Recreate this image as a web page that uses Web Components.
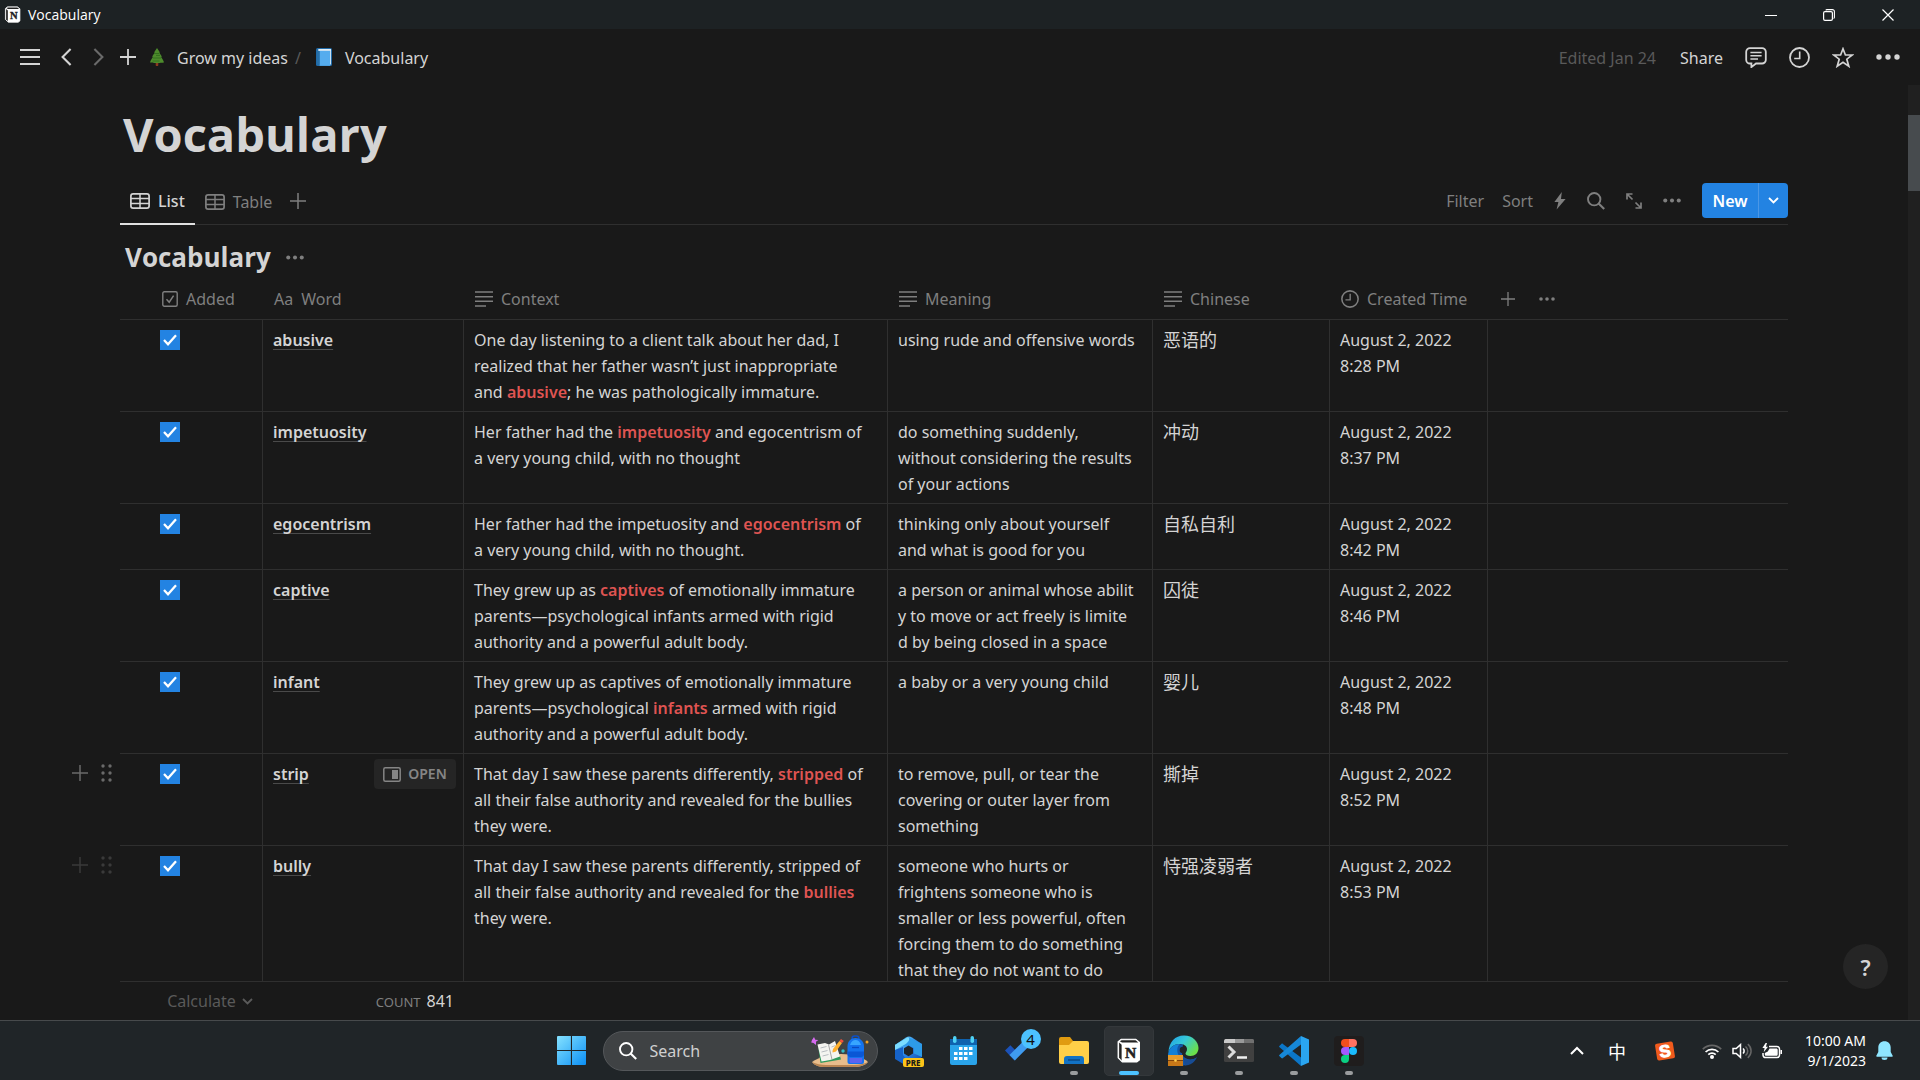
<!DOCTYPE html>
<html lang="en">
<head>
<meta charset="utf-8">
<title>Vocabulary</title>
<style>
  html, body { height: 100%; margin: 0; }
  body {
    --line: #2f2f2f; --text: #d4d4d4; --muted: #7f7f7f; --dim: #5a5a5a; --accent: #2383e2;
    background: #191919; color: var(--text);
    font: 16px/26px "Noto Sans", "Open Sans", "Noto Sans CJK SC", sans-serif;
    overflow: hidden;
  }
</style>
</head>
<body>
<app-window></app-window>

<script>
const BASE = `
  * { box-sizing: border-box; }
  button { font: inherit; color: inherit; background: none; border: 0; padding: 0; margin: 0; display: inline-flex; align-items: center; justify-content: center; }
  a { color: inherit; text-decoration: none; }
`;

class BaseElement extends HTMLElement {
  constructor() { super(); this.attachShadow({ mode: 'open' }); }
  connectedCallback() {
    this.shadowRoot.innerHTML = `<style>${BASE}${this.styles()}</style>${this.markup()}`;
  }
  styles() { return ''; }
  markup() { return ''; }
}

/* name: [width, height, svg body] */
const ICONS = {
  notion: [24, 24, '<path d="M2 3.5 5 1.2h14L22.5 4v17L20 23H6l-4-4z" fill="#fff" stroke="#fff"/><path d="M3 4.2 5.4 6.5V21.5L3 18.6z" fill="#222"/><path d="M3.6 3.2 5.4 2.2h13.4l2.6 2H5.8z" fill="#222"/><path d="M6.6 6.2h14.6v15H6.6z" fill="#fff"/><text x="14" y="19" text-anchor="middle" font-family="Liberation Serif" font-weight="700" font-size="15" fill="#222" stroke="#222" stroke-width=".5">N</text>'],
  min: [12, 12, '<path d="M0 6.5h12" stroke="#fff" fill="none"/>'],
  restore: [12, 12, '<rect x=".6" y="2.6" width="8.8" height="8.8" rx="1.4" fill="none" stroke="#fff" stroke-width="1.2"/><path d="M2.8 1.4C3 .8 3.5.6 4 .6h5.4a2 2 0 0 1 2 2v5.6c0 .5-.3 1-.8 1.2" fill="none" stroke="#fff" stroke-width="1.1"/>'],
  close: [12, 12, '<path d="M.5.5l11 11M11.5.5l-11 11" stroke="#fff" stroke-width="1.2"/>'],
  menu: [20, 18, '<path d="M0 2h20M0 9h20M0 16h20" stroke="currentColor" stroke-width="1.8"/>'],
  back: [11, 18, '<path d="M9.6 1 1.6 9l8 8" fill="none" stroke="currentColor" stroke-width="2.1"/>'],
  forward: [11, 18, '<path d="M1.4 1l8 8-8 8" fill="none" stroke="currentColor" stroke-width="2.1"/>'],
  plus: [16, 16, '<path d="M8 0v16M0 8h16" stroke="currentColor" stroke-width="1.8"/>'],
  plusthin: [16, 16, '<path d="M8 0v16M0 8h16" stroke="currentColor" stroke-width="1.5"/>'],
  tree: [14, 18, '<path d="M5.7 14h2.6v3a1.3 1.3 0 0 1-2.6 0z" fill="#8a3a1e"/><path d="M7 0 10 4.6H9.2L12 8.8h-1L13 12l1 2.2c0 .9-14 .9-14 0L1 12l2-3.2H2L4.8 4.6H4z" fill="#4d8b2c"/><path d="M4 5.5h5M3 10h8M6 7.4h4M2.5 13h7" stroke="#2f6a1c" stroke-width=".8"/>'],
  book: [16, 18, '<rect width="16" height="18" rx="1.6" fill="#1f6aa8"/><path d="M2 2.3C2 1.5 2.6 1 3.4 1H15v15.5h-1.2V3H2z" fill="#e2ecf2"/><rect x="3.6" y="2.8" width="10.6" height="15" fill="#55acee"/><path d="M1 2v14.5h2.4V3z" fill="#266fa8"/>'],
  comment: [22, 21, '<path d="M5 1.1h12a3.7 3.7 0 0 1 3.8 3.6v8.2a3.7 3.7 0 0 1-3.8 3.6H11l-4.6 3.6v-3.6H5A3.7 3.7 0 0 1 1.2 13V4.7A3.7 3.7 0 0 1 5 1.1z" fill="none" stroke="currentColor" stroke-width="1.8"/><path d="M5.4 5.6h11.2M5.4 8.8h11.2M5.4 12h7.6" stroke="currentColor" stroke-width="1.5"/>'],
  clock: [21, 21, '<circle cx="10.5" cy="10.5" r="9.5" fill="none" stroke="currentColor" stroke-width="1.8"/><path d="M10.7 4.5v7H5.2" fill="none" stroke="currentColor" stroke-width="1.6"/>'],
  star: [22, 21, '<path d="M11 1.8 13.4 8h6.8l-5.4 4.2 2 7L11 15.2l-5.8 4 2-7L1.8 8h6.8z" fill="none" stroke="currentColor" stroke-width="1.7"/>'],
  dots: [24, 6, '<circle cx="3" cy="3" r="2.7" fill="currentColor"/><circle cx="12" cy="3" r="2.7" fill="currentColor"/><circle cx="21" cy="3" r="2.7" fill="currentColor"/>'],
  grid: [20, 16, '<rect x=".9" y=".9" width="18.2" height="14.2" rx="2.2" fill="none" stroke="currentColor" stroke-width="1.7"/><path d="M1 5.6h18M1 10.4h18M10 1v14" stroke="currentColor" stroke-width="1.5"/>'],
  bolt: [12, 18, '<path d="M7.8 0 .4 10h4L2.6 17.5 11.6 7H7z" fill="currentColor"/>'],
  search: [18, 18, '<circle cx="7.2" cy="7.2" r="6.2" fill="none" stroke="currentColor" stroke-width="1.9"/><path d="M11.6 11.6 17.2 17" stroke="currentColor" stroke-width="2.1"/>'],
  expand: [16, 16, '<path d="M1 6.5V1h5.5M15 9.5V15H9.5M1.5 1.5 6.5 6.5M9.500 9.500l5 5" fill="none" stroke="currentColor" stroke-width="1.7"/>'],
  down: [11, 7, '<path d="M1 1l4.5 4.5L10 1" fill="none" stroke="currentColor" stroke-width="1.8"/>'],
  up: [14, 9, '<path d="M1 8l6-6 6 6" fill="none" stroke="currentColor" stroke-width="2"/>'],
  checkbox: [16, 16, '<rect x=".8" y=".8" width="14.4" height="14.4" rx="1.5" fill="none" stroke="currentColor" stroke-width="1.4"/><path d="M4.5 8.2 7.2 11.2 11.6 4.6" fill="none" stroke="currentColor" stroke-width="1.5"/>'],
  lines: [18, 16, '<path d="M0 1h18M0 5.7h18M0 10.3h18M0 15h11" stroke="currentColor" stroke-width="1.5"/>'],
  drag: [11, 18, '<g fill="currentColor"><circle cx="2" cy="2" r="1.7"/><circle cx="9" cy="2" r="1.7"/><circle cx="2" cy="9" r="1.7"/><circle cx="9" cy="9" r="1.7"/><circle cx="2" cy="16" r="1.7"/><circle cx="9" cy="16" r="1.7"/></g>'],
  peek: [18, 15, '<rect x=".8" y=".8" width="16.4" height="13.4" rx="1.5" fill="none" stroke="currentColor" stroke-width="1.5"/><rect x="9" y="3" width="6" height="9" fill="currentColor"/>'],
  check: [14, 12, '<path d="M1 6 5 10.2 13 1.2" fill="none" stroke="#fff" stroke-width="2.3"/>'],
  windows: [29, 29, '<defs><linearGradient id="w" x1="0" y1="0" x2="1" y2="1"><stop offset="0" stop-color="#85e2ff"/><stop offset="1" stop-color="#0b8ff5"/></linearGradient></defs><path d="M1 0h12.9v13.9H0V1a1 1 0 0 1 1-1zM15 0h13a1 1 0 0 1 1 1v12.900H15zM0 15h13.900v14H1a1 1 0 0 1-1-1zM15 15h14v13a1 1 0 0 1-1 1H15z" fill="url(#w)"/>'],
  school: [58, 32, '<path d="M1 27C8 22 18 19 30 19s22 3 27 8c-3 4-10 5-14 5H14C9 32 4 31 1 27z" fill="#e8bd8c"/><path d="M1 27c3 4 8 5 13 5h29c4 0 11-1 14-5-4 2-9 3-14 3H15C10 30 5 29 1 27z" fill="#b98552"/><path d="M7 11 9.5 28 30 24.5 29 21 12 26z" fill="#2f9a5c"/><path d="M6.5 9.5 14 8l4 1.5L24 6l5 15.5-7 2.5-3 1-8.5 1.5z" fill="#f4f4f0"/><path d="M17.5 9.5 21 24.5" stroke="#a7a7a7" stroke-width="1"/><path d="M9.5 13l6-1.5M10.5 17l6-1.5M11.5 21l6-1.5M20.5 12l4-1.5M21.5 16l4-1.5" stroke="#b8bcc0"/><path d="M22 14 21.5 17.5 25 16.5 31 8l-2.6-2z" fill="#ffb02e"/><path d="M28.4 6 30 4l2.8 2L31 8z" fill="#f4513b"/><rect x="41" y="1" width="7" height="5" rx="2.5" fill="none" stroke="#0d4fc4" stroke-width="1.5"/><path d="M36.5 27V11.5C36.5 6 40 3 44.5 3S53 6 53 11.5V27a2 2 0 0 1-2 2H38.5a2 2 0 0 1-2-2z" fill="#1473ef"/><path d="M39 10c1-3.5 3-5 5.5-5S49 6.5 50 10z" fill="#38a6ff"/><path d="M36.5 16.5h16.5v2.5a3 3 0 0 1-3 3H39.5a3 3 0 0 1-3-3z" fill="#0a57d6"/><path d="M38.5 23h12.5v3.5a1.5 1.5 0 0 1-1.5 1.5H40a1.5 1.5 0 0 1-1.5-1.5z" fill="#5b63f0"/><path d="M41 12.5h7" stroke="#0b4ac0" stroke-width="1.3"/><path d="M3 2l1.3 2.7L7.3 5 5 6.7 5 10 2.5 8 .2 7.5 1 5z" fill="#d66bf0"/><circle cx="32" cy="16" r="1.7" fill="#35c0c5"/><circle cx="56" cy="7" r="1.5" fill="#f0a020"/>'],
  m365: [28, 30, '<defs><linearGradient id="m" x1="0" y1="0" x2="1" y2="1"><stop offset="0" stop-color="#7be0ff"/><stop offset=".5" stop-color="#2a86e8"/><stop offset="1" stop-color="#1648a8"/></linearGradient></defs><path d="M0 9 11 1.5c2-1.3 4-1.3 6 0L27 8v13l-9 7H10L0 22z" fill="url(#m)"/><path d="M13 1 27 8v13l-8-3.5V12l-5.5-3L0 12V9z" fill="#2d9be9"/><path d="M13 1c3 2 0 6-4 8L0 14V9z" fill="#7bdcff"/><path d="M0 14l8-3v8l6 7-4 3L0 23z" fill="#1663c9"/><path d="M13.5 9.5 18 12.2v5.2l-4.5 2.8L9 17.4v-5.2z" fill="#202528"/>'],
  calendar: [27, 29, '<path d="M0 3h27v24a2 2 0 0 1-2 2H2a2 2 0 0 1-2-2z" fill="#2aa4ea"/><path d="M0 3h27v6H0z" fill="#0f62ae"/><rect x="3" y="0" width="3.5" height="7" rx="1.7" fill="#4fd2f5"/><rect x="20.5" y="0" width="3.5" height="7" rx="1.7" fill="#4fd2f5"/><path d="M9 12.5h3.5M14 12.5h3.5M19 12.5h3.5M4 17.5h3.5M9 17.5h3.5M14 17.5h3.5M19 17.5h3.5M4 22.5h3.5M9 22.5h3.5M14 22.5h3.5" stroke="#fff" stroke-width="3"/>'],
  todo: [34, 30, '<path d="M0 15 6.5 8.5 15 17 11.5 27z" fill="#1b52b8"/><path d="M5.5 20.5 26 0l6.5 6.5L12 27z" fill="#3f9bf0"/>'],
  folder: [30, 27, '<path d="M0 2a2 2 0 0 1 2-2h9l3 4h10v6H0z" fill="#e09b10"/><path d="M0 8h10l4-4h14a2 2 0 0 1 2 2v19a2 2 0 0 1-2 2H2a2 2 0 0 1-2-2z" fill="#ffcf48"/><path d="M5 27v-5a3 3 0 0 1 3-3h14a3 3 0 0 1 3 3v5z" fill="#1272c4"/><path d="M9 23h12" stroke="#0b4a86" stroke-width="1.5"/>'],
  edge: [31, 31, '<defs><linearGradient id="e" x1="0" y1="0" x2="1" y2=".6"><stop offset="0" stop-color="#1d9be8"/><stop offset=".5" stop-color="#36c8d8"/><stop offset="1" stop-color="#6be04a"/></linearGradient></defs><path d="M15 9c-8 0-15 4-14.5 13L9 31c6 0 16-1 19-8-6 3-12 1-14-4z" fill="#1256a8"/><path d="M.5 17C1 7 7 .5 16 .5S30.5 7 30.5 13c0 5-3.5 8-8 8-3 0-5-1-5-2.5s1.5-2 1.5-4.5c0-3-3-5-7-5C6 9 2 12 .5 17z" fill="url(#e)"/><path d="M.5 17C2 12 6 9 12 9c-3 2-3.5 7-1.5 11H0z" fill="#1380d8"/><circle cx="15" cy="15" r="3.3" fill="#202528"/><path d="M15 22c4 4 9 4 14 0-2 5-6 8-12 8.5z" fill="#174c94"/><rect x="0" y="20" width="15" height="11" fill="#c87818"/><path d="M0 20h15v5H0z" fill="#e59a2c"/><path d="M0 25.5h15" stroke="#80430a"/><circle cx="7.5" cy="25.5" r="1.3" fill="#ffd250"/>'],
  terminal: [30, 23, '<rect width="30" height="23" rx="1.5" fill="#404040"/><path d="M1.5 0H28.5A1.5 1.5 0 0 1 30 1.5V4H0V1.5A1.5 1.5 0 0 1 1.5 0z" fill="#707070"/><path d="M1.5 0H11v4H0V1.5z" fill="#c9c9c9"/><path d="M11 0h9v4h-9z" fill="#999"/><path d="M4.5 7.5 10 13 4.5 18.5" fill="none" stroke="#dcdcdc" stroke-width="3"/><path d="M13 18.5h10" stroke="#f0f0f0" stroke-width="2.5"/>'],
  vscode: [30, 30, '<path d="M22 0l8 3.5v23L22 30z" fill="#2aa5f0"/><path d="M22 30 .6 11.3a1 1 0 0 1 0-1.6l1.8-1.8c.5-.4 1-.4 1.5 0L22 21.5z" fill="#0b76c8"/><path d="M22 0 .6 18.7a1 1 0 0 0 0 1.6l1.8 1.8c.5.4 1 .4 1.5 0L22 8.5z" fill="#1688d8"/>'],
  figma: [30, 30, '<rect width="30" height="30" rx="4" fill="#1f1d1d"/><path d="M11 3h4v8h-4a4 4 0 0 1 0-8z" fill="#f24e1e"/><path d="M15 3h4a4 4 0 0 1 0 8h-4z" fill="#ff7262"/><path d="M11 11h4v8h-4a4 4 0 0 1 0-8z" fill="#a259ff"/><circle cx="19" cy="15" r="4" fill="#1abcfe"/><path d="M11 19h4v4a4 4 0 1 1-4-4z" fill="#0acf83"/>'],
  sogou: [20, 20, '<g transform="rotate(-9 10 10)"><rect x="1" y="1.5" width="18" height="17" rx="2" fill="#f05a1c"/><text x="10" y="16" text-anchor="middle" font-family="Liberation Sans" font-weight="700" font-size="17" fill="#fff" stroke="#fff">S</text></g>'],
  wifi: [20, 16, '<g fill="none" stroke-width="1.7"><path d="M.8 6.2a13 13 0 0 1 18.4 0" stroke="#666"/><path d="M3.6 9a9 9 0 0 1 12.8 0M6.3 11.6a5.2 5.2 0 0 1 7.4 0" stroke="#fff"/></g><circle cx="10" cy="14" r="2" fill="#fff"/>'],
  volume: [20, 16, '<path d="M1 5.5h3.2L8.5 1.6v12.8L4.2 10.5H1z" fill="none" stroke="#fff" stroke-width="1.5"/><path d="M11 5.5c1.5 1.2 1.5 3.8 0 5" fill="none" stroke="#fff" stroke-width="1.6"/><path d="M13.5 3.5c3 2.3 3 6.7 0 9M15.8 1.2c4.4 3.5 4.4 10 0 13.6" fill="none" stroke="#666" stroke-width="1.5"/>'],
  battery: [20, 16, '<path d="M7 3.6h8a2.5 2.5 0 0 1 2.5 2.5v6a2.5 2.5 0 0 1-2.5 2.5H3.5A2.5 2.5 0 0 1 1 12.1V10" fill="none" stroke="#fff" stroke-width="1.5"/><path d="M18.5 7h1.5v4h-1.5z" fill="#fff"/><path d="M7.5 5.6h6.7c1 0 1.5.5 1.5 1.5v4.2c0 1-.5 1.5-1.5 1.5H4.3c-1 0-1.5-.5-1.5-1.5V10l3-1.5z" fill="#fff"/><path d="M3.6 0 .4 5h2.2L1.7 9.2 6 3.7H3.9L5 0z" fill="#fff"/>'],
  bell: [17, 19, '<path d="M8.5.3C4.8.3 2.3 3 2.3 6.5V11L.3 14.8c-.2.5 0 .9.6.9h15.2c.6 0 .8-.4.6-.9L14.7 11V6.5C14.7 3 12.2.3 8.5.3zM5.5 16.5h6a3 2.5 0 0 1-6 0z" fill="#8fe6ff"/>']
};

customElements.define('ui-icon', class extends BaseElement {
  styles() { return ':host{display:inline-flex;flex:none} svg{display:block}'; }
  markup() {
    const [w, h, body] = ICONS[this.getAttribute('name')];
    const width = Number(this.getAttribute('w') || w);
    return `<svg aria-hidden="true" width="${width}" height="${Math.round(width * h / w)}" viewBox="0 0 ${w} ${h}">${body}</svg>`;
  }
});

customElements.define('title-bar', class extends BaseElement {
  styles() { return `
    :host { display: flex; align-items: center; justify-content: space-between; height: 29px; background: #1d2224; color: #fff; font-size: 14px; padding: 0 2px 0 4px; flex: none; }
    .name { display: flex; align-items: center; gap: 7px; font-family: "Open Sans", sans-serif; }
    .controls { display: flex; }
    .controls button { width: 58px; height: 28px; }
    .controls button:last-child { width: 60px; }`; }
  markup() { return `
    <div class="name"><ui-icon name="notion" w="17"></ui-icon><span>Vocabulary</span></div>
    <div class="controls">
      <button aria-label="Minimize"><ui-icon name="min"></ui-icon></button>
      <button aria-label="Restore"><ui-icon name="restore"></ui-icon></button>
      <button aria-label="Close"><ui-icon name="close"></ui-icon></button>
    </div>`; }
});

customElements.define('top-bar', class extends BaseElement {
  styles() { return `
    :host { display: flex; align-items: center; justify-content: space-between; height: 56px; padding: 0 20px; flex: none; }
    nav, .left, .right { display: flex; align-items: center; }
    .left { gap: 21px; }
    .left button:last-of-type { margin-left: -5px; }
    .off { color: #6a6a6a; }
    nav { gap: 13px; margin-left: -7px; }
    nav .sep { color: var(--dim); margin: 0 2px 0 -6px; }
    .right { gap: 22px; }
    a, span, .share { padding-top: 2px; }
    .edited { color: var(--dim); padding-right: 2px; }`; }
  markup() { return `
    <div class="left">
      <button aria-label="Open sidebar"><ui-icon name="menu"></ui-icon></button>
      <button aria-label="Back"><ui-icon name="back"></ui-icon></button>
      <button aria-label="Forward" class="off"><ui-icon name="forward"></ui-icon></button>
      <button aria-label="New page"><ui-icon name="plus"></ui-icon></button>
      <nav aria-label="Breadcrumb">
        <ui-icon name="tree"></ui-icon><a href="#ideas">Grow my ideas</a><span class="sep">/</span>
        <ui-icon name="book"></ui-icon><a href="#vocabulary">Vocabulary</a>
      </nav>
    </div>
    <div class="right">
      <span class="edited">Edited Jan 24</span>
      <button class="share">Share</button>
      <button aria-label="Comments"><ui-icon name="comment"></ui-icon></button>
      <button aria-label="Updates"><ui-icon name="clock"></ui-icon></button>
      <button aria-label="Favorite"><ui-icon name="star"></ui-icon></button>
      <button aria-label="More"><ui-icon name="dots"></ui-icon></button>
    </div>`; }
});

customElements.define('view-bar', class extends BaseElement {
  styles() { return `
    :host { display: flex; justify-content: space-between; height: 47px; border-bottom: 1px solid var(--line); color: var(--muted); margin-top: 14px; flex: none; }
    .tabs, .tools { display: flex; align-items: center; }
    .tab { height: 47px; gap: 8px; padding: 1px 10px 0; }
    .tab.on { color: var(--text); font-weight: 500; border-bottom: 2px solid #e0e0e0; }
    .tabs > .add { margin-left: 8px; }
    .tools { gap: 21px; padding-bottom: 1px; }
    .sort { margin-left: -3px; }
    .split { display: flex; height: 35px; background: var(--accent); color: #fff; border-radius: 4px; }
    .split button { font-weight: 600; width: 56px; }
    .split button + button { width: 30px; border-left: 1px solid #4a97e6; }`; }
  markup() { return `
    <div class="tabs">
      <button class="tab on"><ui-icon name="grid"></ui-icon>List</button>
      <button class="tab"><ui-icon name="grid"></ui-icon>Table</button>
      <button class="add" aria-label="Add view"><ui-icon name="plusthin"></ui-icon></button>
    </div>
    <div class="tools">
      <button>Filter</button>
      <button class="sort">Sort</button>
      <button aria-label="Automations"><ui-icon name="bolt"></ui-icon></button>
      <button aria-label="Search"><ui-icon name="search"></ui-icon></button>
      <button aria-label="Full page"><ui-icon name="expand"></ui-icon></button>
      <button aria-label="More"><ui-icon name="dots" w="18"></ui-icon></button>
      <div class="split"><button>New</button><button aria-label="New options"><ui-icon name="down"></ui-icon></button></div>
    </div>`; }
});

const ROWS = [
  ['abusive', 'One day listening to a client talk about her dad, I<br>realized that her father wasn’t just inappropriate<br>and <b>abusive</b>; he was pathologically immature.', 'using rude and offensive words', '恶语的', '8:28 PM'],
  ['impetuosity', 'Her father had the <b>impetuosity</b> and egocentrism of<br>a very young child, with no thought', 'do something suddenly,<br>without considering the results<br>of your actions', '冲动', '8:37 PM'],
  ['egocentrism', 'Her father had the impetuosity and <b>egocentrism</b> of<br>a very young child, with no thought.', 'thinking only about yourself<br>and what is good for you', '自私自利', '8:42 PM'],
  ['captive', 'They grew up as <b>captives</b> of emotionally immature<br>parents—psychological infants armed with rigid<br>authority and a powerful adult body.', 'a person or animal whose abilit<br>y to move or act freely is limite<br>d by being closed in a space', '囚徒', '8:46 PM'],
  ['infant', 'They grew up as captives of emotionally immature<br>parents—psychological <b>infants</b> armed with rigid<br>authority and a powerful adult body.', 'a baby or a very young child', '婴儿', '8:48 PM'],
  ['strip', 'That day I saw these parents differently, <b>stripped</b> of<br>all their false authority and revealed for the bullies<br>they were.', 'to remove, pull, or tear the<br>covering or outer layer from<br>something', '撕掉', '8:52 PM', 'hover'],
  ['bully', 'That day I saw these parents differently, stripped of<br>all their false authority and revealed for the <b>bullies</b><br>they were.', 'someone who hurts or<br>frightens someone who is<br>smaller or less powerful, often<br>forcing them to do something<br>that they do not want to do', '恃强凌弱者', '8:53 PM', 'fading']
];

customElements.define('check-box', class extends BaseElement {
  styles() { return `
    :host { display: block; width: 20px; height: 20px; }
    label { display: grid; place-items: center; }
    label > * { grid-area: 1 / 1; }
    input { appearance: none; margin: 0; width: 20px; height: 20px; }
    input:checked { background: var(--accent); }`; }
  markup() { return `<label><input type="checkbox" checked aria-label="${this.getAttribute('label')}"><ui-icon name="check"></ui-icon></label>`; }
});

customElements.define('vocab-table', class extends BaseElement {
  styles() { return `
    :host { display: block; flex: 1; min-height: 0; overflow: hidden; padding: 0 120px; }
    table { width: 100%; table-layout: fixed; border-collapse: separate; border-spacing: 0; }
    th { height: 45px; padding: 3px 10px 0; font-weight: 400; text-align: left; color: var(--muted); border-bottom: 1px solid var(--line); white-space: nowrap; }
    th > span { display: flex; align-items: center; gap: 8px; }
    th:first-child { padding-left: 42px; }
    th:nth-child(n+2) { padding-left: 12px; }
    th:last-child > span { gap: 24px; padding-left: 2px; }
    td { position: relative; vertical-align: top; padding: 7px 0 6px 10px; border-left: 1px solid var(--line); border-bottom: 1px solid var(--line); white-space: nowrap; }
    td:first-child { border-left: 0; padding: 10px 0 0 40px; }
    b { color: #df5452; font-weight: 600; }
    td a { font-weight: 600; text-decoration: underline 1px #4a4a4a; text-underline-offset: 3px; text-decoration-skip-ink: none; }
    .zh { font-family: "Noto Sans CJK SC", sans-serif; font-size: 18px; line-height: 24px; }
    .gutter { position: absolute; left: -48px; top: 10px; display: flex; align-items: center; gap: 13px; color: #6a6a6a; }
    .fading .gutter { color: #3a3a3a; }
    .open { position: absolute; right: 7px; top: 5px; height: 30px; width: 82px; gap: 7px; font-size: 14px; font-weight: 600; color: #858585; background: #252525; border-radius: 4px; }`; }
  markup() {
    const body = ROWS.map(([word, context, meaning, zh, time, state = '']) => `
      <tr class="${state}">
        <td>${state ? '<div class="gutter"><button aria-label="Add row"><ui-icon name="plusthin"></ui-icon></button><button aria-label="Drag row"><ui-icon name="drag"></ui-icon></button></div>' : ''}<check-box label="${word} added"></check-box></td>
        <td><a href="#${word}">${word}</a>${state === 'hover' ? '<button class="open"><ui-icon name="peek"></ui-icon>OPEN</button>' : ''}</td>
        <td>${context}</td><td>${meaning}</td><td class="zh" lang="zh">${zh}</td>
        <td>August 2, 2022<br>${time}</td><td></td>
      </tr>`).join('');
    return `
    <table>
      <colgroup><col style="width:142px"><col style="width:201px"><col style="width:424px"><col style="width:265px"><col style="width:177px"><col style="width:158px"><col></colgroup>
      <thead><tr>
        <th><span><ui-icon name="checkbox"></ui-icon>Added</span></th>
        <th><span><span>Aa</span>Word</span></th>
        <th><span><ui-icon name="lines"></ui-icon>Context</span></th>
        <th><span><ui-icon name="lines"></ui-icon>Meaning</span></th>
        <th><span><ui-icon name="lines"></ui-icon>Chinese</span></th>
        <th><span><ui-icon name="clock" w="18"></ui-icon>Created Time</span></th>
        <th><span><button aria-label="Add property"><ui-icon name="plusthin" w="14"></ui-icon></button><button aria-label="Property options"><ui-icon name="dots" w="16"></ui-icon></button></span></th>
      </tr></thead>
      <tbody>${body}</tbody>
    </table>`;
  }
});

customElements.define('table-footer', class extends BaseElement {
  styles() { return `
    :host { display: flex; align-items: center; height: 39px; margin: 0 120px; border-top: 1px solid var(--line); flex: none; }
    .calc { color: var(--dim); gap: 6px; width: 180px; justify-content: center; }
    .count { display: flex; align-items: baseline; gap: 6px; width: 154px; justify-content: flex-end; }
    small { font-size: 13px; color: var(--muted); }`; }
  markup() { return `<button class="calc">Calculate<ui-icon name="down"></ui-icon></button><div class="count"><small>COUNT</small><span>841</span></div>`; }
});

customElements.define('page-view', class extends BaseElement {
  styles() { return `
    :host { display: flex; flex: 1; min-height: 0; position: relative; }
    main { flex: 1; min-width: 0; display: flex; flex-direction: column; padding-top: 19px; }
    .head { padding: 0 120px; flex: none; }
    h1, h2 { margin: 0; font-family: "Open Sans", sans-serif; font-weight: 700; }
    h1 { padding-left: 3px; font-size: 47px; line-height: 60px; }
    h2 { font-size: 26px; line-height: 36px; }
    .sub { display: flex; align-items: center; gap: 15px; margin-top: 14px; padding-left: 5px; color: var(--muted); }
    .sub h2 { color: var(--text); }
    .bar { width: 12px; background: #202020; padding-top: 30px; }
    .thumb { height: 76px; background: #474b4e; }
    .help { position: absolute; right: 32px; bottom: 31px; width: 45px; height: 45px; border-radius: 50%; background: #252525; font-size: 22px; font-weight: 600; }`; }
  markup() { return `
    <main>
      <div class="head">
        <h1>Vocabulary</h1>
        <view-bar></view-bar>
        <div class="sub"><h2>Vocabulary</h2><button aria-label="Database options"><ui-icon name="dots" w="18"></ui-icon></button></div>
      </div>
      <vocab-table></vocab-table>
      <table-footer></table-footer>
    </main>
    <div class="bar"><div class="thumb"></div></div>
    <button class="help" aria-label="Help">?</button>`; }
});

customElements.define('task-app', class extends BaseElement {
  styles() { return `
    :host { display: block; }
    button { position: relative; width: 50px; height: 50px; border-radius: 5px; }
    :host([active]) button { background: #2e3235; border: 1px solid #34383b; }
    :host([running]) button::after, :host([active]) button::after { content: ""; position: absolute; bottom: 1px; left: 50%; margin-left: -4px; width: 8px; height: 4px; border-radius: 2px; background: #9a9c9e; }
    :host([active]) button::after { bottom: 0; width: 20px; margin-left: -10px; background: #4cc2ff; }`; }
  markup() { return `<button aria-label="${this.getAttribute('label')}"><ui-icon name="${this.getAttribute('icon')}" ${this.hasAttribute('w') ? `w="${this.getAttribute('w')}"` : ''}></ui-icon><slot></slot></button>`; }
});

customElements.define('task-bar', class extends BaseElement {
  styles() { return `
    :host { display: grid; grid-template-columns: 1fr auto 1fr; align-items: center; height: 60px; background: #202528; border-top: 1px solid #474a4c; color: #fff; flex: none; }
    .apps { grid-column: 2; display: flex; gap: 5px; align-items: center; }
    .search { display: flex; align-items: center; gap: 13px; width: 275px; height: 40px; margin: 0 1px; padding: 0 8px 0 15px; border-radius: 20px; background: #3f4244; border: 1px solid #54575a; }
    input { flex: 1; min-width: 0; width: 0; background: none; border: 0; padding: 0; outline: 0; font: inherit; color: #d0d0d0; }
    input::placeholder { color: #d0d0d0; opacity: 1; }
    .pre { position: absolute; right: 10px; bottom: 9px; padding: 0 3px; border-radius: 2px; background: #fcc419; color: #1a1a1a; font-size: 8px; font-weight: 800; line-height: 9px; }
    .num { position: absolute; right: 3px; top: 3px; width: 20px; height: 20px; border-radius: 50%; background: #4cc2ff; color: #111; font-size: 15px; line-height: 20px; text-align: center; }
    .tray { display: flex; align-items: center; justify-content: flex-end; padding-right: 27px; }
    .ime { font: 18px/24px "Noto Sans CJK SC", sans-serif; margin: 0 29px 0 24px; }
    .sys { display: flex; gap: 10px; margin: 0 23px 0 27px; }
    time { font-size: 14px; line-height: 20px; text-align: right; margin-right: 10px; }`; }
  markup() { return `
    <div class="apps">
      <task-app icon="windows" label="Start"></task-app>
      <label class="search"><ui-icon name="search"></ui-icon><input type="text" placeholder="Search" aria-label="Search"><ui-icon name="school"></ui-icon></label>
      <task-app icon="m365" label="Microsoft 365"><span class="pre">PRE</span></task-app>
      <task-app icon="calendar" label="Calendar"></task-app>
      <task-app icon="todo" w="28" label="To Do"><span class="num">4</span></task-app>
      <task-app icon="folder" label="File Explorer" running></task-app>
      <task-app icon="notion" w="25" label="Notion" active></task-app>
      <task-app icon="edge" label="Edge" running></task-app>
      <task-app icon="terminal" label="Terminal" running></task-app>
      <task-app icon="vscode" label="Visual Studio Code" running></task-app>
      <task-app icon="figma" label="Figma" running></task-app>
    </div>
    <div class="tray">
      <button aria-label="Hidden icons"><ui-icon name="up"></ui-icon></button>
      <span class="ime">中</span>
      <ui-icon name="sogou"></ui-icon>
      <div class="sys"><ui-icon name="wifi"></ui-icon><ui-icon name="volume"></ui-icon><ui-icon name="battery"></ui-icon></div>
      <time>10:00 AM<br>9/1/2023</time>
      <ui-icon name="bell"></ui-icon>
    </div>`; }
});

customElements.define('app-window', class extends BaseElement {
  styles() { return ':host{display:flex;flex-direction:column;height:100vh}'; }
  markup() { return '<title-bar></title-bar><top-bar></top-bar><page-view></page-view><task-bar></task-bar>'; }
});
</script>
</body>
</html>
